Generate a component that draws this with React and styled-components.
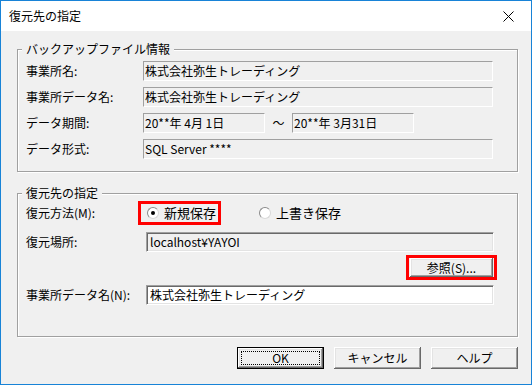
import React from "react";
import styled, { createGlobalStyle } from "styled-components";

const GlobalStyle = createGlobalStyle`
  html, body {
    margin: 0;
    padding: 0;
    background: #ffffff;
  }
  body {
    font-family: "Noto Sans CJK JP", "Noto Sans", sans-serif;
    font-size: 12px;
    color: #000;
  }
`;

const Window = styled.div`
  width: 532px;
  height: 385px;
  box-sizing: border-box;
  border: 1px solid #1883d7;
  background: #f0f0f0;
  display: flex;
  flex-direction: column;
`;

const TitleBar = styled.div`
  height: 30px;
  background: #ffffff;
  display: flex;
  align-items: center;
  justify-content: space-between;
  padding: 0 17px 0 8px;
  flex-shrink: 0;
`;

const Title = styled.span`
  font-size: 12px;
  line-height: 14px;
`;

const Body = styled.div`
  padding: 18px 13px 0 16px;
  display: flex;
  flex-direction: column;
`;

const Group = styled.div`
  position: relative;
  height: ${(p) => p.$height}px;
  box-sizing: border-box;
  margin-top: ${(p) => p.$top || 0}px;
  border: 1px solid #a0a0a0;
  box-shadow: 1px 1px 0 #ffffff, inset 1px 1px 0 #ffffff;
  padding: ${(p) => p.$pad};
  display: flex;
  flex-direction: column;
`;

const Legend = styled.span`
  position: absolute;
  top: -8px;
  left: 4px;
  padding: 0 4px 0 4px;
  background: #f0f0f0;
  line-height: 14px;
`;

const Row = styled.div`
  display: flex;
  align-items: center;
  height: ${(p) => p.$h || 20}px;
  margin-top: ${(p) => p.$gap || 0}px;
  justify-content: ${(p) => (p.$end ? "flex-end" : "flex-start")};
`;

const Label = styled.span`
  width: ${(p) => p.$w}px;
  flex-shrink: 0;
  line-height: 14px;
`;

const Static = styled.div`
  width: ${(p) => p.$w}px;
  height: 20px;
  box-sizing: border-box;
  border-top: 1px solid #a0a0a0;
  border-left: 1px solid #a0a0a0;
  border-bottom: 1px solid #ffffff;
  border-right: 1px solid #ffffff;
  padding-left: 1px;
  display: flex;
  align-items: center;
  white-space: nowrap;
  line-height: 14px;
`;

const Edit = styled.div`
  width: 348px;
  height: 20px;
  box-sizing: border-box;
  background: ${(p) => (p.$disabled ? "#f0f0f0" : "#ffffff")};
  border-top: 1px solid #a0a0a0;
  border-left: 1px solid #a0a0a0;
  border-bottom: 1px solid #ffffff;
  border-right: 1px solid #ffffff;
  box-shadow: inset 1px 1px 0 #696969, inset -1px -1px 0 #e3e3e3;
  padding-left: 3px;
  display: flex;
  align-items: center;
  white-space: nowrap;
  line-height: 14px;
`;

const Tilde = styled.span`
  width: 27px;
  text-align: center;
  line-height: 14px;
`;

const RedFrame = styled.div`
  box-sizing: border-box;
  border: 3px solid #ff0000;
  display: flex;
  align-items: center;
  height: ${(p) => p.$h}px;
  width: ${(p) => p.$w}px;
  padding: ${(p) => p.$pad || "0"};
`;

const Radio = styled.label`
  display: flex;
  align-items: center;
  gap: 5px;
  margin-left: ${(p) => p.$ml || 0}px;
  line-height: 14px;
  font-size: 13px;
`;

const RadioDot = styled.span`
  width: 12px;
  height: 12px;
  box-sizing: border-box;
  border-radius: 50%;
  border: 1px solid #8a8a8a;
  border-bottom-color: #d8d8d8;
  border-right-color: #d8d8d8;
  background: #ffffff;
  display: flex;
  align-items: center;
  justify-content: center;
  &::after {
    content: "";
    width: 4px;
    height: 4px;
    border-radius: 50%;
    background: ${(p) => (p.$on ? "#000" : "transparent")};
  }
`;

const Button = styled.button`
  width: ${(p) => p.$w || 87}px;
  height: ${(p) => p.$h || 22}px;
  box-sizing: border-box;
  font-family: inherit;
  font-size: 12px;
  line-height: 14px;
  color: #000;
  background: #f0f0f0;
  border: ${(p) => (p.$default ? "1px solid #000" : "none")};
  box-shadow: inset -1px -1px 0 #696969, inset 1px 1px 0 #ffffff,
    inset -2px -2px 0 #a0a0a0, inset 2px 2px 0 #e3e3e3;
  padding: 0;
  display: flex;
  align-items: center;
  justify-content: center;
  position: relative;
`;

const FocusRing = styled.span`
  position: absolute;
  inset: 3px;
  border: 1px dotted #000;
`;

const Footer = styled.div`
  display: flex;
  justify-content: flex-end;
  gap: 10px;
  margin-top: 10px;
`;

const CloseIcon = () => (
  <svg width="11" height="11" viewBox="0 0 11 11">
    <path d="M0.5 0.5 L10.5 10.5 M10.5 0.5 L0.5 10.5" stroke="#000" strokeWidth="1" />
  </svg>
);

export default function App() {
  return (
    <>
      <GlobalStyle />
      <Window>
        <TitleBar>
          <Title>復元先の指定</Title>
          <CloseIcon />
        </TitleBar>
        <Body>
          <Group $height={123} $pad="11px 0 0 8px">
            <Legend>バックアップファイル情報</Legend>
            <Row>
              <Label $w={117}>事業所名:</Label>
              <Static $w={350}>株式会社弥生トレーディング</Static>
            </Row>
            <Row $gap={6}>
              <Label $w={117}>事業所データ名:</Label>
              <Static $w={350}>株式会社弥生トレーディング</Static>
            </Row>
            <Row $gap={6}>
              <Label $w={117}>データ期間:</Label>
              <Static $w={122}>20**年 4月 1日</Static>
              <Tilde>～</Tilde>
              <Static $w={122}>20**年 3月31日</Static>
            </Row>
            <Row $gap={6}>
              <Label $w={117}>データ形式:</Label>
              <Static $w={350}>SQL Server ****</Static>
            </Row>
          </Group>

          <Group $height={144} $top={21} $pad="7px 0 0 8px">
            <Legend>復元先の指定</Legend>
            <Row $h={24}>
              <Label $w={112}>復元方法(M):</Label>
              <RedFrame $w={83} $h={24} $pad="0 0 0 6px">
                <Radio>
                  <RadioDot $on />
                  新規保存
                </Radio>
              </RedFrame>
              <Radio $ml={38}>
                <RadioDot />
                上書き保存
              </Radio>
            </Row>
            <Row $gap={7}>
              <Label $w={120}>復元場所:</Label>
              <Edit $disabled>localhost¥YAYOI</Edit>
            </Row>
            <Row $h={25} $gap={3} $end style={{ paddingRight: 20 }}>
              <RedFrame $w={91} $h={25} $pad="0 0 0 1px">
                <Button $w={83} $h={19}>参照(S)...</Button>
              </RedFrame>
            </Row>
            <Row $gap={5}>
              <Label $w={120}>事業所データ名(N):</Label>
              <Edit>株式会社弥生トレーディング</Edit>
            </Row>
          </Group>

          <Footer>
            <Button $default>
              <FocusRing />
              OK
            </Button>
            <Button>キャンセル</Button>
            <Button>ヘルプ</Button>
          </Footer>
        </Body>
      </Window>
    </>
  );
}
